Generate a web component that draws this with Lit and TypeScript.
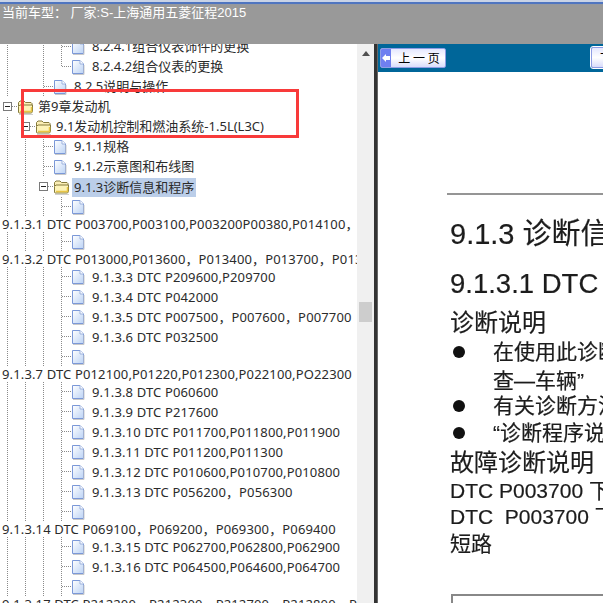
import { LitElement, html, css, svg } from 'lit';
import { customElement } from 'lit/decorators.js';

type Cell = 'blank' | 'line' | 'tee' | 'end' | 'box';

interface TreeRow {
  cells: Cell[];
  icon?: 'doc' | 'folder';
  text?: string;
  selected?: boolean;
}

// guide columns: "0" blank, "1" vertical, "T" tee, "L" corner, "B" expander box
const cols = (s: string): Cell[] =>
  [...s].map((c) => ({ '0': 'blank', '1': 'line', T: 'tee', L: 'end', B: 'box' }[c] as Cell));

const leaf = (text?: string): TreeRow => ({ cells: cols('111T'), icon: 'doc', text });
const wide = (text: string): TreeRow => ({ cells: [], text });

const ROWS: TreeRow[] = [
  { cells: cols('101T'), icon: 'doc', text: '8.2.4.1组合仪表饰件的更换' },
  { cells: cols('101L'), icon: 'doc', text: '8.2.4.2组合仪表的更换' },
  { cells: cols('10T'), icon: 'doc', text: '8.2.5说明与操作' },
  { cells: cols('B'), icon: 'folder', text: '第9章发动机' },
  { cells: cols('1B'), icon: 'folder', text: '9.1发动机控制和燃油系统-1.5L(L3C)' },
  { cells: cols('11T'), icon: 'doc', text: '9.1.1规格' },
  { cells: cols('11T'), icon: 'doc', text: '9.1.2示意图和布线图' },
  { cells: cols('11B'), icon: 'folder', text: '9.1.3诊断信息和程序', selected: true },
  leaf(),
  wide('9.1.3.1 DTC P003700,P003100,P003200P00380,P014100，'),
  leaf(),
  wide('9.1.3.2 DTC P013000,P013600，P013400，P013700，P013800'),
  leaf('9.1.3.3 DTC P209600,P209700'),
  leaf('9.1.3.4 DTC P042000'),
  leaf('9.1.3.5 DTC P007500，P007600，P007700'),
  leaf('9.1.3.6 DTC P032500'),
  leaf(),
  wide('9.1.3.7 DTC P012100,P01220,P012300,P022100,PO22300'),
  leaf('9.1.3.8 DTC P060600'),
  leaf('9.1.3.9 DTC P217600'),
  leaf('9.1.3.10 DTC P011700,P011800,P011900'),
  leaf('9.1.3.11 DTC P011200,P011300'),
  leaf('9.1.3.12 DTC P010600,P010700,P010800'),
  leaf('9.1.3.13 DTC P056200，P056300'),
  leaf(),
  wide('9.1.3.14 DTC P069100，P069200，P069300，P069400'),
  leaf('9.1.3.15 DTC P062700,P062800,P062900'),
  leaf('9.1.3.16 DTC P064500,P064600,P064700'),
  leaf(),
  wide('9.1.3.17 DTC P212200，P212300，P212700，P212800，P212900'),
];

@customElement('app-root')
export class AppRoot extends LitElement {
  static styles = css`
    :host {
      display: block;
      width: 603px;
      height: 603px;
      overflow: hidden;
      background: #fff;
    }
    .topbar {
      height: 44px;
      box-sizing: border-box;
      background: linear-gradient(#c9d3e6 0 2px, #4f75c0 2px 4px, #8f97a8 4px, #999 5px);
      color: #fff;
      font: 13px/18px 'Liberation Sans', 'Noto Sans CJK SC', sans-serif;
      padding: 4px 0 0 2px;
      white-space: pre;
    }
    .main {
      display: flex;
      height: 559px;
    }
    .tree-pane {
      position: relative;
      width: 357px;
      flex: none;
      overflow: hidden;
    }
    .tree {
      margin-top: -7px;
      font: 13px 'Noto Sans', 'Noto Sans CJK SC', sans-serif;
      color: #2b2b2b;
    }
    .row {
      display: flex;
      height: 20px;
      align-items: center;
      white-space: nowrap;
    }
    .row svg {
      flex: none;
      display: block;
    }
    .icon {
      margin-right: 2px;
    }
    .label {
      line-height: 19px;
      height: 20px;
    }
    .dtc {
      line-height: 20px;
      letter-spacing: 0.14px;
    }
    .selected {
      background: #bbcee9;
      margin-left: -2px;
      padding: 0 2px;
      height: 19px;
    }
    .wide {
      height: 15px;
      line-height: 15px;
      padding-left: 2px;
      white-space: nowrap;
      overflow: hidden;
      width: 355px;
      letter-spacing: 0.14px;
    }
    .mark {
      position: absolute;
      left: 21px;
      top: 45px;
      width: 278px;
      height: 49px;
      box-sizing: border-box;
      border: 3px solid #f83a3a;
    }
    .scrollbar {
      width: 17px;
      flex: none;
      background: #f0f0f0;
      box-sizing: border-box;
      padding: 7px 2px 0;
      display: flex;
      flex-direction: column;
      align-items: center;
    }
    .thumb {
      width: 13px;
      height: 20px;
      margin-top: 246px;
      background: #cdcdcd;
    }
    .divider {
      width: 4px;
      flex: none;
      background: linear-gradient(90deg, #333 0 3px, #999);
    }
    .doc {
      flex: 1;
      min-width: 0;
      overflow: hidden;
      font-family: 'Liberation Sans', 'Noto Sans CJK SC', sans-serif;
      color: #1c1c1c;
    }
    .nav {
      height: 28px;
      background: #006699;
      display: flex;
      justify-content: space-between;
      box-sizing: border-box;
      padding: 4px 0 0 2px;
    }
    .btn {
      display: flex;
      width: 66px;
      height: 20px;
      box-sizing: border-box;
      border: 1px solid #8f9de4;
      border-radius: 2px;
      background: linear-gradient(#e4e7ff, #fff 50%, #d8dcfb);
      color: #000;
      font: 12px/17px 'Noto Sans CJK SC', sans-serif;
      overflow: hidden;
    }
    .btn .tab {
      width: 10px;
      flex: none;
      background: #6f7ff0;
      display: flex;
      align-items: center;
      justify-content: center;
    }
    .btn .cap {
      flex: 1;
      text-align: center;
      white-space: pre;
      padding-left: 2px;
    }
    .btn.next {
      width: 12px;
      height: 21px;
      margin-top: -1px;
      flex: none;
      border-radius: 2px 0 0 2px;
      border-right: none;
      outline: 1px solid #fff;
      display: block;
      padding-left: 8px;
      line-height: 20px;
      white-space: nowrap;
    }
    .page {
      padding: 121px 0 0 72px;
      width: 400px;
      filter: blur(0.35px);
      -webkit-text-stroke: 0.2px #1c1c1c;
    }
    .page hr {
      margin: 0 0 0 -3px;
      height: 2px;
      border: none;
      background: #959595;
    }
    .h1 {
      margin-top: 20px;
      font-size: 29px;
      line-height: 38px;
    }
    .h2 {
      margin-top: 13px;
      font-size: 27.5px;
      line-height: 36px;
    }
    .sub {
      margin-top: 6px;
      font-size: 24px;
      line-height: 30px;
    }
    .sub.fault {
      margin-top: 2px;
    }
    .li {
      display: flex;
      font-size: 21px;
      line-height: 27px;
    }
    .li i {
      width: 43px;
      flex: none;
      display: flex;
      align-items: center;
      padding-left: 3px;
      box-sizing: border-box;
    }
    .li i::before {
      content: '';
      width: 12px;
      height: 12px;
      border-radius: 50%;
      background: #111;
    }
    .li.cont {
      padding-left: 43px;
      margin-top: 2px;
    }
    .li.after {
      margin-top: -2px;
    }
    .p {
      font-size: 21px;
      line-height: 27px;
      white-space: pre;
    }
    .p.first {
      margin-top: -1px;
    }
    .p.second {
      margin-top: -1px;
    }
    .table {
      margin: 37px 0 0 1px;
      height: 40px;
      box-sizing: border-box;
      border: 1px solid #888;
      border-width: 2px 0 0 2px;
      font-size: 18px;
      line-height: 20px;
      padding: 8px 0 0 80px;
      white-space: pre;
    }
  `;

  private cell(kind: Cell) {
    return html`<svg width="18" height="20" viewBox="0 0 18 20">
      ${kind === 'line' || kind === 'tee'
        ? svg`<line x1="7.5" y1="0" x2="7.5" y2="20" stroke="#8a8a8a" stroke-dasharray="1 1"/>`
        : ''}
      ${kind === 'end'
        ? svg`<line x1="7.5" y1="0" x2="7.5" y2="10" stroke="#8a8a8a" stroke-dasharray="1 1"/>`
        : ''}
      ${kind === 'tee' || kind === 'end'
        ? svg`<line x1="8" y1="9.5" x2="18" y2="9.5" stroke="#8a8a8a" stroke-dasharray="1 1"/>`
        : ''}
      ${kind === 'box'
        ? svg`<line x1="12" y1="9.5" x2="18" y2="9.5" stroke="#8a8a8a" stroke-dasharray="1 1"/>
            <rect x="3.5" y="5.5" width="8" height="8" fill="#fff" stroke="#7a7a7a"/>
            <line x1="5" y1="9.5" x2="10" y2="9.5" stroke="#222"/>`
        : ''}
    </svg>`;
  }

  private icon(kind: 'doc' | 'folder') {
    if (kind === 'doc') {
      return html`<svg class="icon" width="18" height="20" viewBox="0 0 18 20">
        <defs>
          <linearGradient id="dg" x1="0" y1="0" x2="1" y2="1">
            <stop offset="0" stop-color="#fff" />
            <stop offset="1" stop-color="#bcd3f5" />
          </linearGradient>
        </defs>
        <path d="M0.5 3.5H8L11.5 7V16.5H0.5Z" fill="url(#dg)" stroke="#7b98d8" />
        <path d="M8 3.5V7H11.5" fill="#fff" stroke="#9db2dc" />
        <path d="M1 17.5H12V8" fill="none" stroke="#c9c9c9" />
      </svg>`;
    }
    return html`<svg class="icon" width="18" height="20" viewBox="0 0 18 20">
      <path d="M0.5 9V5.5L2 4H6L7.5 5.5H13L14 6.5V9" fill="#fbeeb4" stroke="#857a3c" />
      <path d="M0.5 15.5V9.5L2 8H14.5V14.5L13.5 16H1Z" fill="#fdf3b8" stroke="#857a3c" />
      <path d="M2 14.5H13.5V10" fill="none" stroke="#e8c546" stroke-width="1.5" />
      <path d="M1 17.5H15" stroke="#cfcfcf" />
    </svg>`;
  }

  private row(r: TreeRow) {
    if (!r.cells.length) return html`<div class="wide">${r.text}</div>`;
    const cls = `label ${r.selected ? 'selected' : ''} ${r.text?.includes('DTC') ? 'dtc' : ''}`;
    return html`<div class="row">
      ${r.cells.map((c) => this.cell(c))}
      ${r.icon ? this.icon(r.icon) : ''}
      ${r.text ? html`<span class=${cls}>${r.text}</span>` : ''}
    </div>`;
  }

  render() {
    return html`
      <div class="topbar">当前车型： 厂家:S-上海通用五菱征程2015</div>
      <div class="main">
        <div class="tree-pane">
          <div class="tree">${ROWS.map((r) => this.row(r))}</div>
          <div class="mark"></div>
        </div>
        <div class="scrollbar">
          <svg width="8" height="5" viewBox="0 0 8 5"><path d="M4 0L8 5H0Z" fill="#505050" /></svg>
          <div class="thumb"></div>
        </div>
        <div class="divider"></div>
        <div class="doc">
          <div class="nav">
            <div class="btn">
              <span class="tab">
                <svg width="8" height="8" viewBox="0 0 8 8"><path d="M0 4L4 0V2H8V6H4V8Z" fill="#fff" /></svg>
              </span>
              <span class="cap">上 一 页</span>
            </div>
            <div class="btn next">下 一 页</div>
          </div>
          <div class="page">
            <hr />
            <div class="h1">9.1.3 诊断信息和程序</div>
            <div class="h2">9.1.3.1 DTC P003700</div>
            <div class="sub">诊断说明</div>
            <div class="li"><i></i>在使用此诊断程序之前</div>
            <div class="li cont">查—车辆”</div>
            <div class="li after"><i></i>有关诊断方法</div>
            <div class="li"><i></i>“诊断程序说明</div>
            <div class="sub fault">故障诊断说明</div>
            <div class="p first">DTC P003700 下游</div>
            <div class="p second">DTC  P003700 下游</div>
            <div class="p">短路</div>
            <div class="table">内容</div>
          </div>
        </div>
      </div>
    `;
  }
}
